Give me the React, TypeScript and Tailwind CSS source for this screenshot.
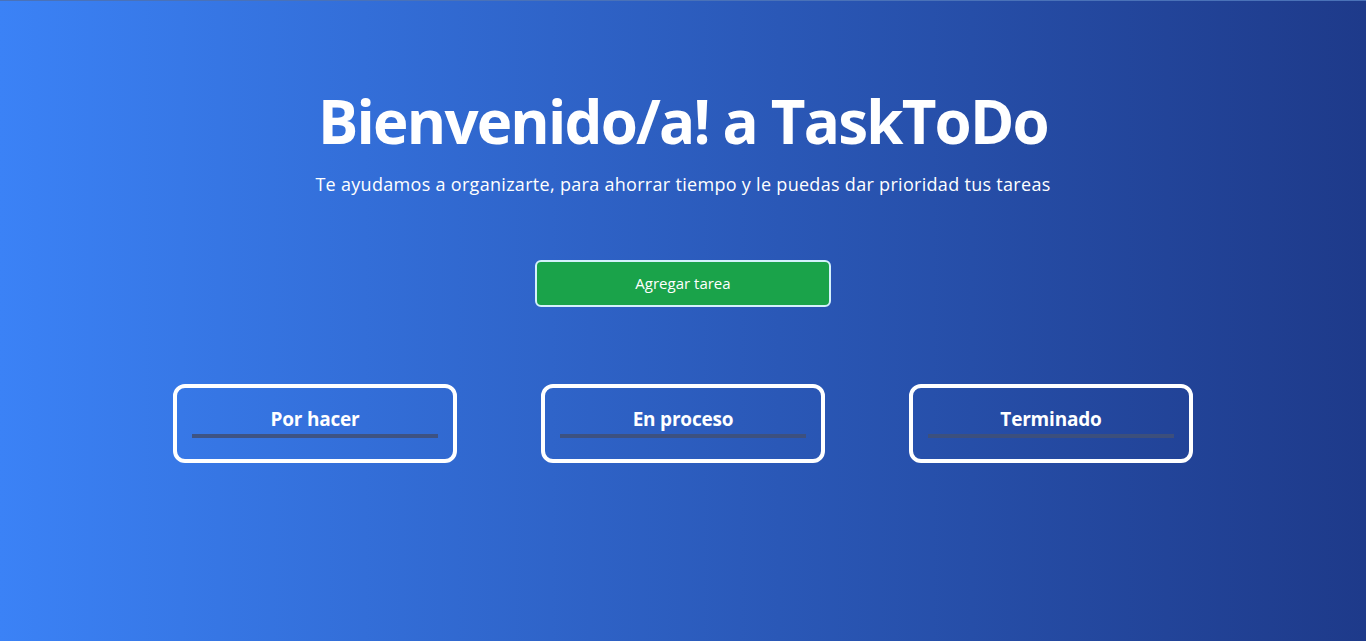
const columns = ["Por hacer", "En proceso", "Terminado"];

const App = () => {
  return (
    <div className="min-h-screen bg-gradient-to-r from-[#3b82f6] to-[#1e3a8a] font-['Open_Sans',sans-serif] text-white border-t border-[#4a72b8]">
      <div className="flex flex-col items-center pt-[83px]">
        <h1 className="text-[60px] leading-[74px] font-bold tracking-[-1.8px]">
          Bienvenido/a! a TaskToDo
        </h1>
        <p className="mt-[12px] text-[18px] leading-[28px] tracking-[0.3px]">
          Te ayudamos a organizarte, para ahorrar tiempo y le puedas dar prioridad tus tareas
        </p>
        <button className="mt-[62px] w-[296px] h-[47px] rounded-md border-2 border-[#d4f1fb] bg-[#1aa34a] text-[15px]">
          Agregar tarea
        </button>
      </div>
      <div className="mt-[77px] flex justify-center gap-[84px]">
        {columns.map((title) => (
          <div
            key={title}
            className="w-[284px] h-[79px] rounded-xl border-4 border-white px-[15px] pt-[18px]"
          >
            <h2 className="text-center text-[19px] leading-[26px] font-bold tracking-[-0.2px]">{title}</h2>
            <div className="mt-[2px] h-[4px] bg-[#3f5079]/90" />
          </div>
        ))}
      </div>
    </div>
  );
};

export default App;
